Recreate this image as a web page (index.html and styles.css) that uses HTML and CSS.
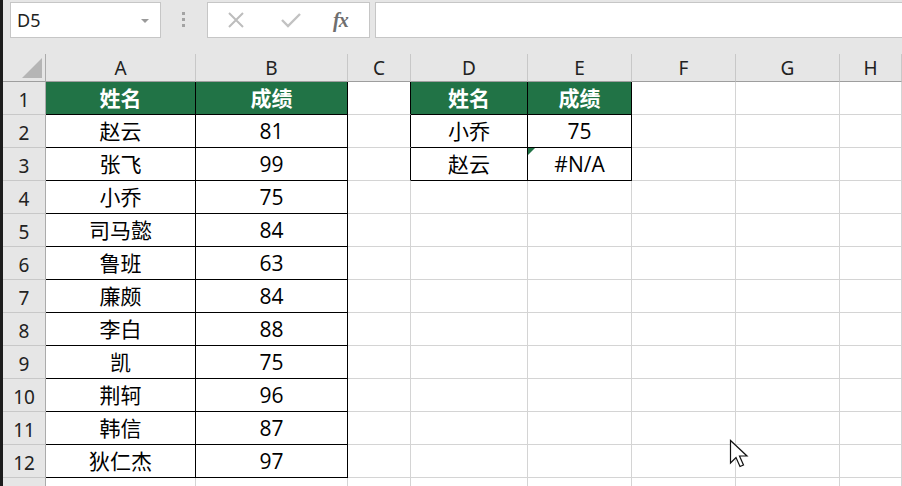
FILE: index.html
```html
<!DOCTYPE html>
<html>
  <head>
    <meta charset="utf-8">
    <link rel="stylesheet" href="styles.css">
  </head>
  <body>
    <div class="window">
      <div class="formula-bar">
        <div class="name-box">D5<span class="name-arrow"></span></div>
        <div class="grip"><span></span><span></span><span></span></div>
        <div class="fx-box">
          <svg class="fx-btn" width="18" height="18" viewBox="0 0 18 18">
            <path d="M2 2 L16 16 M16 2 L2 16" stroke="#bdbdbd" stroke-width="2" fill="none"/>
          </svg>
          <svg class="fx-btn" width="22" height="18" viewBox="0 0 22 18">
            <path d="M2 9 L8 15 L20 3" stroke="#c2c2c2" stroke-width="2.4" fill="none"/>
          </svg>
          <span class="fx-label">fx</span>
        </div>
        <div class="formula-input"></div>
      </div>

      <table class="sheet">
        <tr class="col-heads">
          <th class="corner"><span class="corner-tri"></span></th>
          <th class="w-a">A</th>
          <th class="w-b">B</th>
          <th class="w-c">C</th>
          <th class="w-d">D</th>
          <th class="w-e">E</th>
          <th class="w-f">F</th>
          <th class="w-g">G</th>
          <th class="w-h">H</th>
        </tr>
        <tr>
          <th class="rh">1</th>
          <td class="bk hd">姓名</td><td class="bk hd">成绩</td><td class="edge"></td>
          <td class="bk hd">姓名</td><td class="bk hd">成绩</td><td></td><td></td><td></td>
        </tr>
        <tr>
          <th class="rh">2</th>
          <td class="bk">赵云</td><td class="bk">81</td><td class="edge"></td>
          <td class="bk">小乔</td><td class="bk">75</td><td></td><td></td><td></td>
        </tr>
        <tr>
          <th class="rh">3</th>
          <td class="bk">张飞</td><td class="bk">99</td><td class="edge"></td>
          <td class="bk">赵云</td><td class="bk err"><span class="err-flag"></span>#N/A</td><td></td><td></td><td></td>
        </tr>
        <tr>
          <th class="rh">4</th>
          <td class="bk">小乔</td><td class="bk">75</td><td></td>
          <td></td><td></td><td></td><td></td><td></td>
        </tr>
        <tr>
          <th class="rh">5</th>
          <td class="bk">司马懿</td><td class="bk">84</td><td></td>
          <td></td><td></td><td></td><td></td><td></td>
        </tr>
        <tr>
          <th class="rh">6</th>
          <td class="bk">鲁班</td><td class="bk">63</td><td></td>
          <td></td><td></td><td></td><td></td><td></td>
        </tr>
        <tr>
          <th class="rh">7</th>
          <td class="bk">廉颇</td><td class="bk">84</td><td></td>
          <td></td><td></td><td></td><td></td><td></td>
        </tr>
        <tr>
          <th class="rh">8</th>
          <td class="bk">李白</td><td class="bk">88</td><td></td>
          <td></td><td></td><td></td><td></td><td></td>
        </tr>
        <tr>
          <th class="rh">9</th>
          <td class="bk">凯</td><td class="bk">75</td><td></td>
          <td></td><td></td><td></td><td></td><td></td>
        </tr>
        <tr>
          <th class="rh">10</th>
          <td class="bk">荆轲</td><td class="bk">96</td><td></td>
          <td></td><td></td><td></td><td></td><td></td>
        </tr>
        <tr>
          <th class="rh">11</th>
          <td class="bk">韩信</td><td class="bk">87</td><td></td>
          <td></td><td></td><td></td><td></td><td></td>
        </tr>
        <tr>
          <th class="rh">12</th>
          <td class="bk">狄仁杰</td><td class="bk">97</td><td></td>
          <td></td><td></td><td></td><td></td><td></td>
        </tr>
        <tr>
          <th class="rh"></th>
          <td></td><td></td><td></td>
          <td></td><td></td><td></td><td></td><td></td>
        </tr>
      </table>

      <svg class="cursor" width="22" height="30" viewBox="0 0 22 30">
        <path d="M1.5 1.5 L1.5 24 L7 18.5 L11 27.5 L14.5 26 L10.5 17 L18 17 Z" fill="#fff" stroke="#111" stroke-width="1.2" stroke-linejoin="miter"/>
      </svg>
    </div>
  </body>
</html>
```

FILE: styles.css
```css
* {
  box-sizing: border-box;
}
body {
  margin: 0;
  background-color: #fff;
  overflow: hidden;
}
.window {
  position: relative;
  height: 486px;
  overflow: hidden;
  border-left: 3px solid #1c1c1c;
  font-family: "Open Sans", "Noto Sans CJK SC", sans-serif;
  color: #000;
}

/* formula bar */
.formula-bar {
  display: flex;
  align-items: flex-start;
  height: 54px;
  padding: 2px 0 0 7px;
  background-color: #e6e6e6;
}
.name-box {
  position: relative;
  width: 151px;
  height: 36px;
  padding-left: 6px;
  background-color: #fff;
  border: 1px solid #c6c6c6;
  font: 18px/34px "Noto Sans", sans-serif;
  color: #222;
}
.name-arrow {
  position: absolute;
  right: 11px;
  top: 16px;
  border-left: 4px solid transparent;
  border-right: 4px solid transparent;
  border-top: 4px solid #9a9a9a;
}
.grip {
  display: flex;
  flex-direction: column;
  gap: 3px;
  width: 46px;
  padding: 10px 0 0 21px;
}
.grip span {
  width: 3px;
  height: 3px;
  background-color: #a3a3a3;
}
.fx-box {
  display: flex;
  align-items: center;
  width: 163px;
  height: 36px;
  padding-left: 19px;
  background-color: #fff;
  border: 1px solid #c6c6c6;
}
.fx-btn {
  margin-right: 35px;
}
.fx-btn + .fx-btn {
  margin-right: 31px;
}
.fx-label {
  font: italic bold 20px/1 "Liberation Serif", serif;
  color: #6e6e6e;
  letter-spacing: -1px;
}
.formula-input {
  flex: 1;
  height: 36px;
  margin-left: 5px;
  margin-right: -4px;
  background-color: #fff;
  border: 1px solid #c6c6c6;
}

/* grid */
.sheet {
  table-layout: fixed;
  border-collapse: separate;
  border-spacing: 0;
  width: 899px;
}
th,
td {
  padding: 0 0 1px;
  height: 33px;
  border-right: 1px solid #d4d4d4;
  border-bottom: 1px solid #d4d4d4;
  text-align: center;
  font-weight: normal;
  font-size: 21px;
  line-height: 30px;
  white-space: nowrap;
  overflow: hidden;
}
.col-heads th {
  height: 28px;
  padding: 1px 0 0;
  background-color: #e6e6e6;
  border-right-color: #c8c8c8;
  border-bottom-color: #9e9e9e;
  font: 19px/26px "Noto Sans", sans-serif;
  color: #222;
}
.col-heads .corner {
  position: relative;
  border-right-color: #ababab;
}
.corner-tri {
  position: absolute;
  right: 3px;
  bottom: 3px;
  border-left: 20px solid transparent;
  border-bottom: 20px solid #b5b5b5;
}
.w-a { width: 150px; }
.corner { width: 43px; }
.w-b { width: 152px; }
.w-c { width: 63px; }
.w-d { width: 117px; }
.w-e,
.w-f,
.w-g { width: 104px; }
.w-h { width: 62px; }

.rh {
  padding: 3px 0 0;
  background-color: #e6e6e6;
  border-right-color: #ababab;
  border-bottom-color: #c8c8c8;
  font: 19px/28px "Noto Sans", sans-serif;
  color: #222;
}

.bk {
  border-right-color: #000;
  border-bottom-color: #000;
}
.edge {
  border-right-color: #000;
}
.hd {
  background-color: #217346;
  color: #fff;
  font-weight: bold;
}
.err {
  position: relative;
}
.err-flag {
  position: absolute;
  left: 0;
  top: 0;
  border-top: 7px solid #217346;
  border-right: 7px solid transparent;
}

.cursor {
  position: absolute;
  left: 726px;
  top: 439px;
}
```
